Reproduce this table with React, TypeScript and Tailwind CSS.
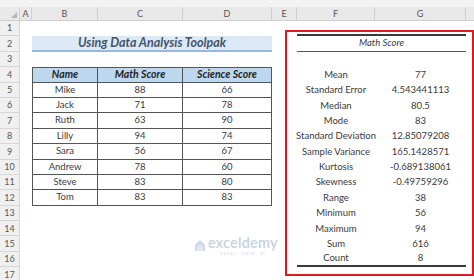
import React from 'react'

const cols = ['A', 'B', 'C', 'D', 'E', 'F', 'G']
const colW = ['w-[12px]', 'w-[66px]', 'w-[85px]', 'w-[89px]', 'w-[25px]', 'w-[78px]', 'w-[91px]']

const people = [
  ['Mike', '88', '66'],
  ['Jack', '71', '78'],
  ['Ruth', '63', '90'],
  ['Lilly', '94', '74'],
  ['Sara', '56', '67'],
  ['Andrew', '78', '60'],
  ['Steve', '83', '80'],
  ['Tom', '83', '83'],
]

const stats = [
  ['Mean', '77'],
  ['Standard Error', '4.543441113'],
  ['Median', '80.5'],
  ['Mode', '83'],
  ['Standard Deviation', '12.85079208'],
  ['Sample Variance', '165.1428571'],
  ['Kurtosis', '-0.689138061'],
  ['Skewness', '-0.49759296'],
  ['Range', '38'],
  ['Minimum', '56'],
  ['Maximum', '94'],
  ['Sum', '616'],
  ['Count', '8'],
]

function Cell({ w, className = '', children }: { w: string; className?: string; children?: React.ReactNode }) {
  return (
    <div className={`${w} shrink-0 h-full flex items-center justify-center whitespace-nowrap ${className}`}>
      {children}
    </div>
  )
}

function SheetRow({ n }: { n: number }) {
  const p = n >= 5 && n <= 12 ? people[n - 5] : null
  const s = n >= 4 && n <= 16 ? stats[n - 4] : null
  const tb = 'border-r border-b border-[#555]'
  const th = `${tb} border-t bg-[#bdd7ee] font-bold italic text-[10.5px] text-[#1f1f1f]`

  let left: React.ReactNode
  if (n === 2) {
    left = (
      <div className="w-[240px] shrink-0 h-full flex items-center justify-center bg-[#dde9f6] border-b-2 border-[#9db4dc] text-[12.5px] font-bold italic text-[#44546a]">
        Using Data Analysis Toolpak
      </div>
    )
  } else if (n === 4) {
    left = (
      <>
        <Cell w={colW[1]} className={`${th} border-l`}>Name</Cell>
        <Cell w={colW[2]} className={th}>Math Score</Cell>
        <Cell w={colW[3]} className={th}>Science Score</Cell>
      </>
    )
  } else if (p) {
    left = (
      <>
        <Cell w={colW[1]} className={`${tb} border-l`}>{p[0]}</Cell>
        <Cell w={colW[2]} className={tb}>{p[1]}</Cell>
        <Cell w={colW[3]} className={tb}>{p[2]}</Cell>
      </>
    )
  } else {
    left = <div className="w-[240px] shrink-0" />
  }

  let right: React.ReactNode
  if (n === 1) {
    right = <div className="w-[169px] shrink-0 h-full border-b-2 border-[#3a3a3a]" />
  } else if (n === 2) {
    right = (
      <div className="w-[169px] shrink-0 h-full flex items-center justify-center border-b border-[#555] italic">
        Math Score
      </div>
    )
  } else if (s) {
    right = (
      <>
        <Cell w={colW[5]} className={n === 16 ? 'border-b-2 border-[#3a3a3a]' : ''}>{s[0]}</Cell>
        <Cell w={colW[6]} className={n === 16 ? 'border-b-2 border-[#3a3a3a]' : ''}>{s[1]}</Cell>
      </>
    )
  } else {
    right = <div className="w-[169px] shrink-0" />
  }

  return (
    <div className="flex h-[15.4px] text-[9.5px] text-[#3a3a3a]">
      <div className="w-[20px] shrink-0 h-full flex items-center justify-center bg-[#f0f0f0] border-r border-b border-[#d6d6d6] text-[9px] text-[#555]">
        {n}
      </div>
      <div className="w-[12px] shrink-0" />
      {left}
      <div className="w-[25px] shrink-0" />
      {right}
      <div className="flex-1" />
    </div>
  )
}

function Watermark() {
  return (
    <div className="absolute left-[194px] top-[236px] flex items-center gap-[2px] opacity-50 pointer-events-none">
      <svg width="12" height="13" viewBox="0 0 12 13">
        <path d="M1 12 L1 6 L6 1 L11 6 L11 12 Z" fill="#9fb3cc" />
        <path d="M3 12 L3 8 L6 5 L9 8 L9 12 Z" fill="#c3d1e2" />
      </svg>
      <div className="flex flex-col items-center leading-none">
        <span className="text-[14.5px] font-semibold text-[#8fa6c4] tracking-[0.2px]">exceldemy</span>
        <span className="text-[4px] text-[#9fb0c6] tracking-[0.8px] mt-[1px]">EXCEL · DATA · BI</span>
      </div>
    </div>
  )
}

export default function App() {
  return (
    <div className="relative w-[474px] h-[280px] overflow-hidden bg-white font-['Lato',sans-serif]">
      <div className="h-[7px] bg-[#f3f3f3]" />
      <div className="flex h-[14px] bg-[#e9e9e9] border-b border-[#cfcfcf] text-[9px] text-[#555]">
        <div className="w-[20px] shrink-0 h-full border-r border-[#cfcfcf] relative">
          <div className="absolute right-[2px] bottom-[2px] w-0 h-0 border-l-[6px] border-l-transparent border-b-[6px] border-b-[#b5b5b5]" />
        </div>
        {cols.map((c, i) => (
          <Cell key={c} w={colW[i]} className="border-r border-[#cfcfcf]">
            {c}
          </Cell>
        ))}
        <div className="flex-1" />
      </div>
      {Array.from({ length: 17 }, (_, i) => (
        <SheetRow key={i} n={i + 1} />
      ))}
      <Watermark />
      <div className="absolute left-[285px] top-[30px] w-[189px] h-[246px] border-2 border-[#e0191e] pointer-events-none" />
    </div>
  )
}
